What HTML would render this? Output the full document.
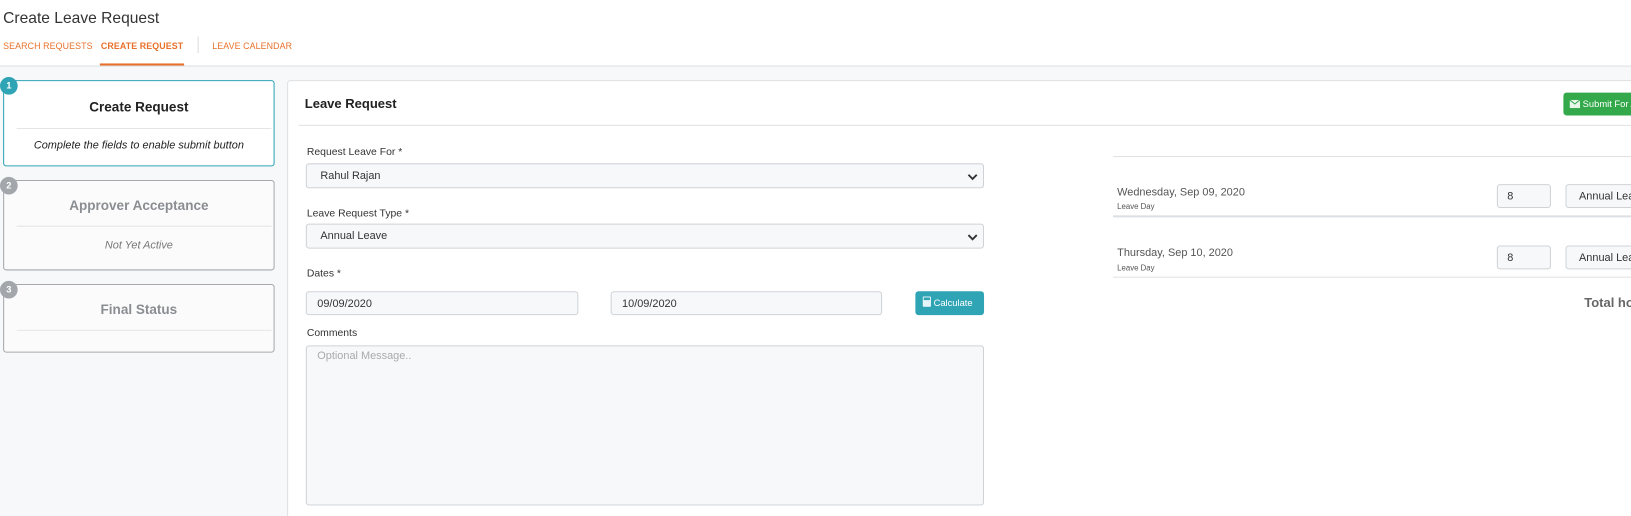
<!DOCTYPE html>
<html style="overflow:hidden;height:516px"><head><meta charset="utf-8"><style>
*{box-sizing:border-box}
body{margin:0;width:1631px;height:516px;overflow:hidden;background:#f7f8fa;font-family:"Liberation Sans",sans-serif;color:#333;position:relative}
#w{position:absolute;left:0;top:0;width:1568px;height:496px;overflow:hidden;transform:scale(1.0402);transform-origin:0 0}
.a{position:absolute}
.hdr{left:0;top:0;width:1568px;height:64px;background:#fff;border-bottom:1px solid #dde0e4}
.tab{font-size:8.5px;letter-spacing:.1px;color:#e8702a;top:39px}
.step{left:3px;width:261px;border:1px solid #a5a9ae;border-radius:3px;background:#fbfbfb}
.step .t{position:absolute;left:0;right:0;text-align:center;font-size:13px;font-weight:bold;color:#8a8d91}
.step .hr{position:absolute;left:12px;right:2px;height:1px;background:#e3e5e8}
.step .s{position:absolute;left:0;right:0;text-align:center;font-size:10.5px;font-style:italic;color:#777}
.badge{width:17px;height:17px;border-radius:50%;background:#a3a6aa;color:#fff;font-size:9px;font-weight:bold;text-align:center;line-height:17px}
.lbl{font-size:10px;color:#333;left:295px}
.inp{background:#f7f8fa;border:1px solid #cfd3d8;border-radius:3px;font-size:10.5px;color:#333;padding-left:13px;line-height:22px}
.chev{position:absolute;right:5px;top:7px}
</style></head><body><div id="w">
<div class="a hdr"></div>
<div class="a" style="left:3px;top:9px;font-size:15px;color:#333">Create Leave Request</div>
<div class="a tab" style="left:3px">SEARCH REQUESTS</div>
<div class="a tab" style="left:97px;font-weight:bold">CREATE REQUEST</div>
<div class="a" style="left:96px;top:61px;width:81px;height:2px;background:#e8702a"></div>
<div class="a" style="left:190px;top:35px;width:1px;height:16px;background:#ddd"></div>
<div class="a tab" style="left:204px">LEAVE CALENDAR</div>

<div class="a step" style="top:77px;height:83px;border-color:#2fa4b5;background:#fff">
<div class="t" style="top:17px;color:#222">Create Request</div><div class="hr" style="top:45px"></div>
<div class="s" style="top:56px;color:#222">Complete the fields to enable submit button</div></div>
<div class="a badge" style="left:0;top:74px;background:#2fa4b5">1</div>
<div class="a step" style="top:173px;height:87px">
<div class="t" style="top:16px">Approver Acceptance</div><div class="hr" style="top:43px"></div>
<div class="s" style="top:56px">Not Yet Active</div></div>
<div class="a badge" style="left:0;top:170px">2</div>
<div class="a step" style="top:273px;height:66px">
<div class="t" style="top:16px">Final Status</div><div class="hr" style="top:43px"></div></div>
<div class="a badge" style="left:0;top:270px">3</div>

<div class="a" style="left:276px;top:77px;width:1400px;height:430px;background:#fff;border:1px solid #dde0e4;border-radius:3px"></div>
<div class="a" style="left:293px;top:93px;font-size:12.5px;font-weight:bold;color:#222">Leave Request</div>
<div class="a" style="left:287px;top:120px;width:1400px;height:1px;background:#e0e2e5"></div>
<div class="a" style="left:1503px;top:89px;width:140px;height:22px;background:#33a94b;border-radius:3px;color:#fff;font-size:9px;line-height:22px;padding-left:6px"><svg width="10" height="8" style="vertical-align:-1px" viewBox="0 0 10 8"><rect width="10" height="8" fill="#e8f6ea"/><path d="M0 0L5 4L10 0" stroke="#33a94b" fill="none"/></svg> Submit For Approval</div>

<div class="a lbl" style="top:141px">Request Leave For *</div>
<div class="a inp" style="left:294px;top:157px;width:652px;height:24px">Rahul Rajan<svg class="chev" width="10" height="10" viewBox="0 0 10 10"><path d="M1 3L5 7L9 3" stroke="#333" stroke-width="1.8" fill="none"/></svg></div>
<div class="a lbl" style="top:200px">Leave Request Type *</div>
<div class="a inp" style="left:294px;top:215px;width:652px;height:24px">Annual Leave<svg class="chev" width="10" height="10" viewBox="0 0 10 10"><path d="M1 3L5 7L9 3" stroke="#333" stroke-width="1.8" fill="none"/></svg></div>
<div class="a lbl" style="top:258px">Dates *</div>
<div class="a inp" style="left:294px;top:280px;width:262px;height:23px;padding-left:10px">09/09/2020</div>
<div class="a inp" style="left:587px;top:280px;width:261px;height:23px;padding-left:10px">10/09/2020</div>
<div class="a" style="left:880px;top:280px;width:66px;height:23px;background:#2fa4b5;border-radius:3px;color:#fff;font-size:9px;line-height:23px;padding-left:7px;white-space:nowrap"><svg width="8" height="10" style="vertical-align:-1px" viewBox="0 0 8 10"><rect width="8" height="10" rx="1" fill="#e6f5f7"/><rect x="1" y="1" width="6" height="2.5" fill="#2fa4b5"/></svg> Calculate</div>
<div class="a lbl" style="top:315px">Comments</div>
<div class="a inp" style="left:294px;top:332px;width:652px;height:154px;line-height:18px;padding:0 0 0 10px;color:#aaa">Optional Message..</div>

<div class="a" style="left:1070px;top:150px;width:600px;height:1px;background:#e0e2e5"></div>
<div class="a" style="left:1074px;top:179px;font-size:10.5px;color:#555">Wednesday, Sep 09, 2020</div>
<div class="a" style="left:1074px;top:194px;font-size:7.5px;color:#555">Leave Day</div>
<div class="a inp" style="left:1439px;top:177px;width:52px;height:23px;padding-left:9px">8</div>
<div class="a inp" style="left:1505px;top:177px;width:200px;height:23px;padding-left:12px">Annual Leave</div>
<div class="a" style="left:1070px;top:207px;width:600px;height:2px;background:#dcdfe3"></div>
<div class="a" style="left:1074px;top:237px;font-size:10.5px;color:#555">Thursday, Sep 10, 2020</div>
<div class="a" style="left:1074px;top:253px;font-size:7.5px;color:#555">Leave Day</div>
<div class="a inp" style="left:1439px;top:236px;width:52px;height:23px;padding-left:9px">8</div>
<div class="a inp" style="left:1505px;top:236px;width:200px;height:23px;padding-left:12px">Annual Leave</div>
<div class="a" style="left:1070px;top:266px;width:600px;height:1px;background:#e0e2e5"></div>
<div class="a" style="left:1523px;top:284px;font-size:12.5px;font-weight:bold;color:#666;white-space:nowrap">Total hours: 16</div>
</div></body></html>
